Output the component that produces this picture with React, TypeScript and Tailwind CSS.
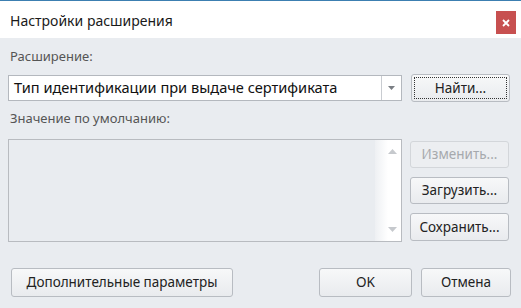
import React from "react";

const font = { fontFamily: '"Noto Sans", "Open Sans", sans-serif' };

const btn =
  "flex items-center justify-center rounded-[3px] border border-[#b8bcc2] bg-gradient-to-b from-[#f7f8f9] to-[#e9ebee] text-[13.5px] text-[#222]";

function Button({
  className,
  children,
  disabled,
  focused,
}: {
  className: string;
  children: React.ReactNode;
  disabled?: boolean;
  focused?: boolean;
}) {
  return (
    <div
      className={
        disabled
          ? `flex items-center justify-center rounded-[3px] border border-[#d3d6da] bg-[#eceef1] text-[13.5px] text-[#a6a9ad] ${className}`
          : `${btn} ${className}`
      }
    >
      {focused ? (
        <div className="m-[2px] flex h-[calc(100%-4px)] w-[calc(100%-4px)] items-center justify-center border border-dotted border-[#333]">
          {children}
        </div>
      ) : (
        children
      )}
    </div>
  );
}

export default function App() {
  return (
    <div className="flex h-[308px] w-[521px] flex-col bg-[#e9ecf0]" style={font}>
      <div className="h-px bg-[#3c7fb1]" />
      <div className="flex h-[37px] items-start justify-between bg-white">
        <div className="pl-[10px] pt-[9px] text-[14px] text-[#1a1a1a]">Настройки расширения</div>
        <div className="mr-[5px] mt-[10px] flex h-[23px] w-[20px] items-center justify-center bg-[#c75050]">
          <svg width="8" height="8" viewBox="0 0 8 8">
            <path d="M1 1L7 7M7 1L1 7" stroke="white" strokeWidth="1.8" />
          </svg>
        </div>
      </div>

      <div className="flex flex-1 flex-col px-[8px]">
        <div className="mt-[8px] pl-[2px] text-[13px] leading-[20px] text-[#555]">Расширение:</div>
        <div className="mt-[8px] flex items-center gap-[9px]">
          <div className="flex h-[26px] w-[394px] items-center border border-[#b4b8be] bg-white">
            <div className="flex-1 pl-[5px] text-[14.6px] text-[#111]">
              Тип идентификации при выдаче сертификата
            </div>
            <div className="flex h-full w-[20px] items-center justify-center border-l border-[#c9ccd1]">
              <svg width="7" height="4" viewBox="0 0 7 4">
                <path d="M0 0H7L3.5 4Z" fill="#7a7e84" />
              </svg>
            </div>
          </div>
          <Button className="h-[28px] w-[99px]" focused>
            Найти...
          </Button>
        </div>

        <div className="mt-[6px] pl-[2px] text-[13px] leading-[20px] text-[#555]">Значение по умолчанию:</div>
        <div className="mt-[11px] flex gap-[8px]">
          <div className="flex h-[103px] w-[394px] border border-[#b8bbc0] bg-[#e9ecf0]">
            <div className="flex-1" />
            <div className="flex w-[26px] flex-col items-center justify-between bg-gradient-to-r from-[#eef0f3] via-white to-white py-[9px] pl-[8px]">
              <svg width="9" height="5" viewBox="0 0 9 5">
                <path d="M0 5H9L4.5 0Z" fill="#c6c9cd" />
              </svg>
              <svg width="9" height="5" viewBox="0 0 9 5">
                <path d="M0 0H9L4.5 5Z" fill="#c6c9cd" />
              </svg>
            </div>
          </div>
          <div className="flex flex-col gap-[9px] pt-[2px]">
            <Button className="h-[27px] w-[99px]" disabled>
              Изменить...
            </Button>
            <Button className="h-[27px] w-[99px]">Загрузить...</Button>
            <Button className="h-[28px] w-[99px]">Сохранить...</Button>
          </div>
        </div>

        <div className="mt-[26px] flex items-center pl-[3px] pr-[2px]">
          <Button className="h-[29px] w-[222px]">Дополнительные параметры</Button>
          <div className="flex-1" />
          <Button className="h-[29px] w-[93px]">OK</Button>
          <Button className="ml-[9px] h-[29px] w-[90px]">Отмена</Button>
        </div>
      </div>
    </div>
  );
}
